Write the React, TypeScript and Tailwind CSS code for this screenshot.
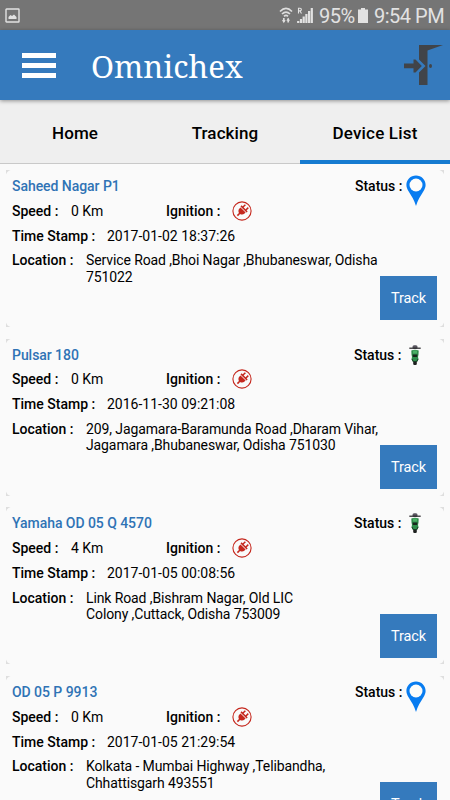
import React from "react";

interface Device {
  name: string;
  speed: number;
  timeStamp: string;
  location: string[];
  type: "pin" | "bike";
}

const devices: Device[] = [
  {
    name: "Saheed Nagar P1",
    speed: 0,
    timeStamp: "2017-01-02 18:37:26",
    location: ["Service Road ,Bhoi Nagar ,Bhubaneswar, Odisha", "751022"],
    type: "pin",
  },
  {
    name: "Pulsar 180",
    speed: 0,
    timeStamp: "2016-11-30 09:21:08",
    location: [
      "209, Jagamara-Baramunda Road ,Dharam Vihar,",
      "Jagamara ,Bhubaneswar, Odisha 751030",
    ],
    type: "bike",
  },
  {
    name: "Yamaha OD 05 Q 4570",
    speed: 4,
    timeStamp: "2017-01-05 00:08:56",
    location: ["Link Road ,Bishram Nagar, Old LIC", "Colony ,Cuttack, Odisha 753009"],
    type: "bike",
  },
  {
    name: "OD 05 P 9913",
    speed: 0,
    timeStamp: "2017-01-05 21:29:54",
    location: ["Kolkata - Mumbai Highway ,Telibandha,", "Chhattisgarh 493551"],
    type: "pin",
  },
];

const PinIcon = () => (
  <svg width="20" height="31" viewBox="0 0 20 31" className="ml-[3px]">
    <path
      d="M10 0.5C4.6 0.5 0.4 4.7 0.4 9.9c0 2.4 1 4.4 2.3 6.6C5.6 21 8.4 25.4 10 31c1.6-5.6 4.4-10 7.3-14.5 1.3-2.2 2.3-4.2 2.3-6.6C19.6 4.7 15.4 0.5 10 0.5z"
      fill="#087cf0"
    />
    <circle cx="10" cy="10" r="6.5" fill="#fcfcfa" />
  </svg>
);

const BikeIcon = () => (
  <svg width="12" height="20" viewBox="0 0 12 20" className="ml-[7px] mr-[17px] mt-px">
    <rect x="3.5" y="0.3" width="5" height="3.5" rx="1.5" fill="#5a5660" />
    <path d="M0.3 3.2h11.4" stroke="#252327" strokeWidth="1.2" fill="none" />
    <rect x="4.2" y="14" width="3.6" height="6" rx="1.2" fill="#1d201e" />
    <path d="M2.3 5.5Q6 4 9.7 5.5L9.5 9.5 9 12l.5 2-1 2.5h-5L2.5 14l.5-2-.5-2.5z" fill="#2f8d4b" />
    <path d="M3.5 9.5h5l-.4 2.5H3.9z" fill="#18251c" />
    <path d="M4 5.5h4v3H4z" fill="#4cae66" />
    <path d="M3 14l1.2 2.5h3.6L9 14" stroke="#1c3c26" fill="none" />
  </svg>
);

const PlugIcon = () => (
  <svg width="20" height="20" viewBox="0 0 20 20">
    <circle cx="10" cy="10" r="9.1" fill="none" stroke="#c5281e" strokeWidth="1.1" />
    <g transform="rotate(45 10 10)" fill="#c5281e">
      <rect x="7.2" y="3.2" width="1.5" height="4" />
      <rect x="11.3" y="3.2" width="1.5" height="4" />
      <rect x="5.7" y="6.3" width="8.6" height="1.5" />
      <path d="M6.4 8.5h7.2v1.5c0 1.9-1.5 3.2-2.8 3.5V16.5H9.2v-3c-1.3-.3-2.8-1.6-2.8-3.5z" />
    </g>
  </svg>
);

const ExitIcon = () => (
  <svg width="39" height="41" viewBox="0 0 39 41" fill="#414449">
    <path d="M15 0h24L23.5 5.5V40H15V27.5l6.5-6.5-6.500-6.500z" />
    <path d="M0 18.6h9.5V14.500h2l6.300 6.500-6.300 6.500h-2v-4.300H0z" />
    <ellipse cx="26.5" cy="21" rx="1.5" ry="2" />
  </svg>
);

const CornerMarks = () => {
  const mark = <path d="M0 4.5V0h4.5Q1 1 0 4.5z" fill="#dedede" />;
  return (
    <>
      <svg width="5" height="5" className="absolute left-0 top-0">{mark}</svg>
      <svg width="5" height="5" className="absolute right-0 top-0 rotate-90">{mark}</svg>
      <svg width="5" height="5" className="absolute right-0 bottom-0 rotate-180">{mark}</svg>
      <svg width="5" height="5" className="absolute left-0 bottom-0 -rotate-90">{mark}</svg>
    </>
  );
};

const StatusBar = () => (
  <div className="flex h-[30px] items-center bg-[#757575] pl-[5px] pr-[7px] pt-px text-[#e2e2e2]">
    <svg width="15" height="15" viewBox="0 0 15 15">
      <rect x="1" y="1" width="13" height="13" rx="0.5" fill="none" stroke="#e2e2e2" strokeWidth="1.4" />
      <path d="M3.5 11V9l2-2 1.5 1 2-1.5L11.5 9v2z" fill="#e2e2e2" />
    </svg>
    <svg width="14" height="17" viewBox="0 0 14 17" className="ml-auto" fill="none" stroke="#dedede" strokeWidth="1.7">
      <path d="M1 4.5Q7-1.5 13 4.5M3 7Q7 3 11 7M5 9.4Q7 7.4 9 9.4" />
      <path d="M4.8 11v4M9.2 11.5v4" />
      <path d="M3 13h3.6L4.8 16.3zM7.4 13.7h3.6L9.2 10.7z" fill="#dedede" stroke="none" />
    </svg>
    <svg width="16" height="17" viewBox="0 0 16 17" className="ml-[4px]" fill="none" stroke="#e2e2e2">
      <path d="M1.5 6.5V1.2H3a1.3 1.3 0 0 1 0 2.7H1.5M3 4l1.5 2.5" strokeWidth="1.1" />
      <path d="M1.2 14v2M4 12v4M6.7 9.5v6.5M9.4 7v9M12.1 4v12M14.8 1v15" strokeWidth="2.2" />
    </svg>
    <span className="ml-[6px] w-[37px] whitespace-nowrap text-[20px] tracking-[-0.5px]">95%</span>
    <svg width="10" height="15" viewBox="0 0 10 15" className="ml-[2px]" fill="#e2e2e2">
      <path d="M3 0h4v1.5h3V15H0V1.5h3z" />
    </svg>
    <span className="ml-[6px] w-[69px] whitespace-nowrap text-[20px] tracking-[-0.5px]">9:54 PM</span>
  </div>
);

const Header = () => (
  <header className="relative z-10 flex h-[70px] items-center bg-[#357abd] pl-[22px] pr-[7px] shadow-[0_1px_4px_rgba(0,0,0,0.4)]">
    <div className="flex w-[34px] flex-col gap-[5px]">
      <span className="h-[5px] bg-white" />
      <span className="h-[5px] bg-white" />
      <span className="h-[5px] bg-white" />
    </div>
    <h1 className="ml-[35px] mt-0.5 font-['Noto_Serif','DejaVu_Serif_Condensed','DejaVu_Serif',serif] text-[31px] text-white">
      Omnichex
    </h1>
    <div className="ml-auto">
      <ExitIcon />
    </div>
  </header>
);

const Tabs = () => (
  <nav className="grid h-[64px] grid-cols-3 border-b border-[#c9c9c9] bg-[#efefef] text-center text-[17px] font-medium leading-[66px] tracking-[0.1px]">
    <span>Home</span>
    <span>Tracking</span>
    <span className="h-[64px] border-b-4 border-[#167bd0] tracking-[0.2px]">Device List</span>
  </nav>
);

const DeviceCard = ({ device }: { device: Device }) => (
  <article className="relative h-[157px] shrink-0 px-1.5 text-[14px] leading-4">
    <CornerMarks />
    <div className="flex h-[28px] justify-between pt-[8px]">
      <h2 className="font-medium tracking-[-0.05px] text-[#2f73b5]">{device.name}</h2>
      <div className="flex h-[31px] pr-[12.5px]">
        <span className="font-medium">Status :</span>
        <div className={device.type === "pin" ? "-mt-[3px]" : "-mt-[3px] -mr-[12px]"}>
          {device.type === "pin" ? <PinIcon /> : <BikeIcon />}
        </div>
      </div>
    </div>
    <div className="flex h-[25px] items-center">
      <span className="w-[59px] font-medium">Speed :</span>
      <span className="w-[95px]">{device.speed} Km</span>
      <span className="w-[66px] font-medium">Ignition :</span>
      <PlugIcon />
    </div>
    <div className="flex h-[25px] items-center">
      <span className="w-[95px] font-medium">Time Stamp :</span>
      <span>{device.timeStamp}</span>
    </div>
    <div className="flex pt-[4.3px]">
      <span className="w-[74px] font-medium">Location :</span>
      <p className="whitespace-nowrap leading-[16.4px] tracking-[-0.11px]">
        {device.location[0]}
        <br />
        {device.location[1]}
      </p>
    </div>
    <button className="absolute right-[7px] bottom-[6.8px] h-[44px] w-[57px] bg-[#357abd] pt-[2px] text-[14.5px] tracking-[-0.1px] text-white">
      Track
    </button>
  </article>
);

const App = () => {
  return (
    <div className="flex h-[800px] w-[450px] flex-col overflow-hidden bg-[#fafafa] font-[Roboto,sans-serif] text-black">
      <StatusBar />
      <Header />
      <Tabs />
      <main className="flex min-h-0 flex-1 flex-col gap-[11.7px] overflow-hidden px-[6px] pt-[6px]">
        {devices.map((device) => (
          <DeviceCard key={device.name} device={device} />
        ))}
      </main>
    </div>
  );
};

export default App;
